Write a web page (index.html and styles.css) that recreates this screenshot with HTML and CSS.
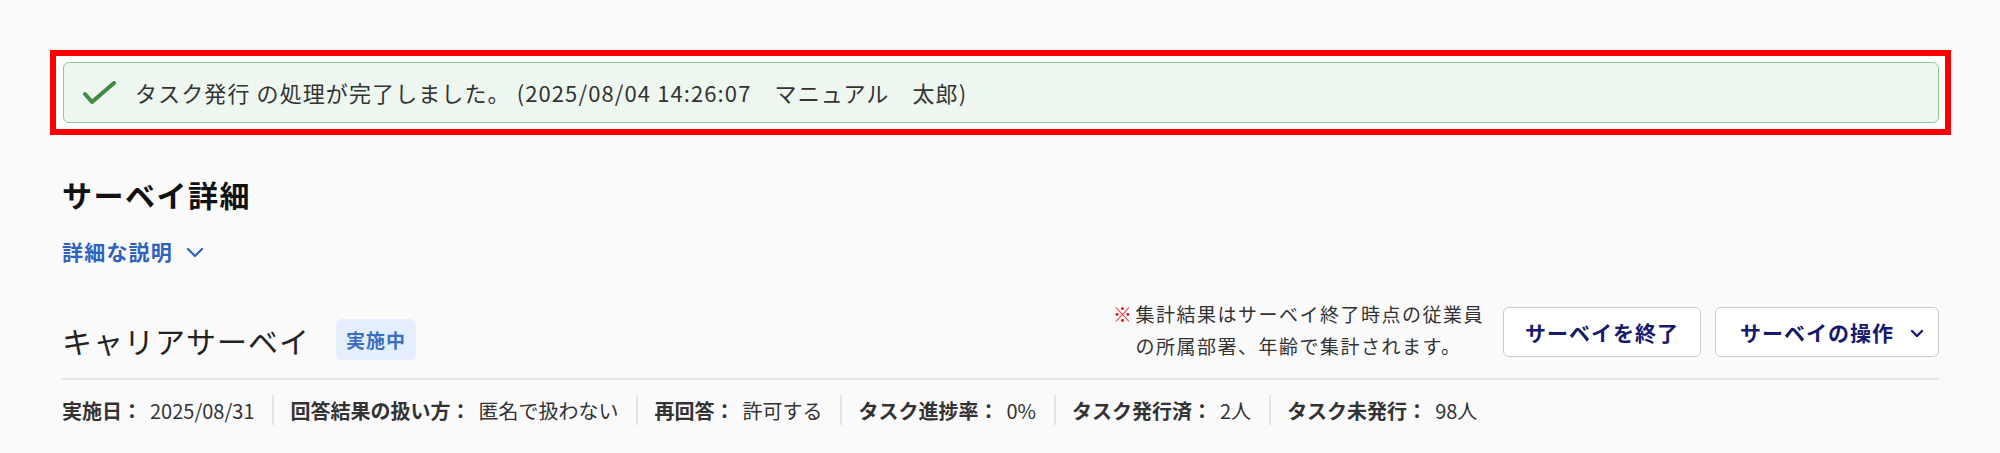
FILE: index.html
```html
<!DOCTYPE html>
<html lang="ja">
<head>
<meta charset="utf-8">
<title>サーベイ詳細</title>
<link rel="stylesheet" href="styles.css">
</head>
<body>
<div class="highlight">
  <div class="alert">
    <svg class="alert-icon" width="34" height="26" viewBox="0 0 34 26" aria-hidden="true">
      <polyline points="2,13 9,21 31,2" fill="none" stroke="#3d8c41" stroke-width="4" stroke-linecap="round" stroke-linejoin="round"/>
    </svg>
    <span class="alert-text">タスク発行 の処理が完了しました。 (2025/08/04 14:26:07　マニュアル　太郎)</span>
  </div>
</div>

<section class="detail">
  <h1 class="page-title">サーベイ詳細</h1>
  <button class="desc-toggle" type="button">
    <span>詳細な説明</span>
    <svg width="18" height="11" viewBox="0 0 18 11" aria-hidden="true">
      <polyline points="2,2 9,9 16,2" fill="none" stroke="#2f63bb" stroke-width="2.2" stroke-linecap="round" stroke-linejoin="round"/>
    </svg>
  </button>

  <div class="survey-head">
    <div class="survey-name">
      <h2 class="survey-title">キャリアサーベイ</h2>
      <span class="badge">実施中</span>
    </div>
    <div class="survey-actions">
      <p class="note"><span class="note-mark">※</span><span>集計結果はサーベイ終了時点の従業員<br>の所属部署、年齢で集計されます。</span></p>
      <button class="btn" type="button">サーベイを終了</button>
      <button class="btn btn-menu" type="button">
        <span>サーベイの操作</span>
        <svg width="14" height="9" viewBox="0 0 14 9" aria-hidden="true">
          <polyline points="2,2 7,7 12,2" fill="none" stroke="#17196b" stroke-width="2.4" stroke-linecap="round" stroke-linejoin="round"/>
        </svg>
      </button>
    </div>
  </div>

  <ul class="meta">
    <li class="meta-item"><span class="meta-label">実施日：</span><span class="meta-value">2025/08/31</span></li>
    <li class="meta-item"><span class="meta-label">回答結果の扱い方：</span><span class="meta-value">匿名で扱わない</span></li>
    <li class="meta-item"><span class="meta-label">再回答：</span><span class="meta-value">許可する</span></li>
    <li class="meta-item"><span class="meta-label">タスク進捗率：</span><span class="meta-value">0%</span></li>
    <li class="meta-item"><span class="meta-label">タスク発行済：</span><span class="meta-value">2人</span></li>
    <li class="meta-item"><span class="meta-label">タスク未発行：</span><span class="meta-value">98人</span></li>
  </ul>
</section>
</body>
</html>
```

FILE: styles.css
```css
* {
  box-sizing: border-box;
}

html, body {
  margin: 0;
  padding: 0;
}

body {
  background: #fafafa;
  color: #333;
  font-family: "Noto Sans CJK JP", "Noto Sans", sans-serif;
  width: 2000px;
  height: 453px;
  overflow: hidden;
}

.highlight {
  margin: 50px 49px 0 50px;
  border: 6px solid #ff0000;
  background: #ffffff;
  padding: 6px 6px 6px 7px;
}

.alert {
  display: flex;
  align-items: center;
  height: 61px;
  border: 1px solid #8fca93;
  border-radius: 6px;
  background: #eef7ef;
  padding: 0 19px;
}

.alert-icon {
  flex: none;
  margin-right: 18px;
  margin-top: 2px;
}

.alert-text {
  font-size: 22px;
  letter-spacing: 1.1px;
  color: #333;
  line-height: 29px;
}

.detail {
  padding: 0 61px 0 62px;
}

.page-title {
  margin: 39px 0 0;
  font-size: 30px;
  line-height: 40px;
  font-weight: 700;
  letter-spacing: 1.5px;
  color: #111;
}

.desc-toggle {
  display: flex;
  align-items: center;
  gap: 13px;
  margin: 23px 0 0;
  padding: 0;
  border: 0;
  background: none;
  font-family: inherit;
  font-size: 21px;
  line-height: 28px;
  font-weight: 700;
  letter-spacing: 1.2px;
  color: #2f63bb;
  cursor: pointer;
}

.desc-toggle svg {
  margin-top: 2px;
}

.survey-head {
  display: flex;
  justify-content: space-between;
  align-items: flex-start;
  margin-top: 33px;
  padding-bottom: 16px;
  border-bottom: 2px solid #e6e6e6;
}

.survey-name {
  display: flex;
  align-items: center;
  gap: 26px;
  margin-top: 21px;
}

.survey-title {
  margin: 0;
  font-size: 30px;
  line-height: 40px;
  font-weight: 400;
  letter-spacing: 1px;
  color: #222;
}

.badge {
  display: inline-flex;
  align-items: center;
  height: 41px;
  padding: 0 10px;
  border-radius: 6px;
  background: #e4eefc;
  color: #3a6ec3;
  font-size: 19px;
  font-weight: 700;
  letter-spacing: 1px;
}

.survey-actions {
  display: flex;
  align-items: flex-start;
}

.note {
  display: flex;
  margin: 0 19px 0 0;
  font-size: 19px;
  line-height: 32px;
  letter-spacing: 1.5px;
  color: #333;
}

.note-mark {
  color: #e60012;
  margin-right: 2px;
}

.btn {
  display: flex;
  align-items: center;
  justify-content: center;
  height: 50px;
  margin-top: 9px;
  padding: 0 21px;
  border: 1px solid #c9c9c9;
  border-radius: 6px;
  background: #fff;
  font-family: inherit;
  font-size: 21px;
  font-weight: 700;
  letter-spacing: 1px;
  color: #17196b;
  cursor: pointer;
}

.btn + .btn {
  margin-left: 14px;
}

.btn-menu {
  padding: 0 14px 0 24px;
  gap: 16px;
}

.btn-menu svg {
  margin-top: 2px;
}

.meta {
  display: flex;
  list-style: none;
  margin: 15px 0 0;
  padding: 0;
}

.meta-item {
  display: flex;
  align-items: center;
  height: 30px;
  padding: 0 18px 0 16px;
  border-left: 2px solid #e3e3e3;
  font-size: 20px;
  letter-spacing: 0;
}

.meta-item:first-child {
  padding-left: 0;
  border-left: 0;
}

.meta-label {
  font-weight: 700;
  color: #333;
}

.meta-value {
  margin-left: 8px;
  color: #333;
}
```
